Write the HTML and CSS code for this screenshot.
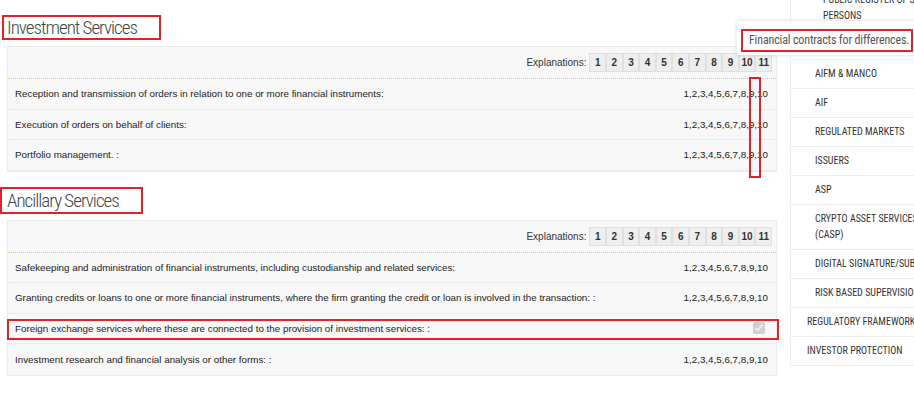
FILE: index.html
```html
<!DOCTYPE html>
<html lang="en">
<head>
  <meta charset="UTF-8">
  <title>Services</title>
  <link rel="stylesheet" href="styles.css">
</head>
<body>

  <div class="page">
    <main class="content">

      <h2 class="section-title first">Investment Services</h2>
      <div class="panel">
        <div class="panel-head">
          <span class="expl-label">Explanations:</span>
          <div class="expl">
            <span>1</span><span>2</span><span>3</span><span>4</span><span>5</span><span>6</span><span>7</span><span>8</span><span>9</span><span>10</span><span>11</span>
          </div>
        </div>
        <div class="row"><span>Reception and transmission of orders in relation to one or more financial instruments:</span><span class="codes">1,2,3,4,5,6,7,8,9,10</span></div>
        <div class="row"><span>Execution of orders on behalf of clients:</span><span class="codes">1,2,3,4,5,6,7,8,9,10</span></div>
        <div class="row"><span>Portfolio management. :</span><span class="codes">1,2,3,4,5,6,7,8,9,10</span></div>
        <div class="mark-col"></div>
      </div>

      <h2 class="section-title second">Ancillary Services</h2>
      <div class="panel">
        <div class="panel-head">
          <span class="expl-label">Explanations:</span>
          <div class="expl">
            <span>1</span><span>2</span><span>3</span><span>4</span><span>5</span><span>6</span><span>7</span><span>8</span><span>9</span><span>10</span><span>11</span>
          </div>
        </div>
        <div class="row"><span>Safekeeping and administration of financial instruments, including custodianship and related services:</span><span class="codes">1,2,3,4,5,6,7,8,9,10</span></div>
        <div class="row"><span>Granting credits or loans to one or more financial instruments, where the firm granting the credit or loan is involved in the transaction: :</span><span class="codes">1,2,3,4,5,6,7,8,9,10</span></div>
        <div class="row marked"><span>Foreign exchange services where these are connected to the provision of investment services: :</span><input type="checkbox" checked disabled></div>
        <div class="row"><span>Investment research and financial analysis or other forms: :</span><span class="codes">1,2,3,4,5,6,7,8,9,10</span></div>
      </div>

    </main>

    <aside class="sidebar">
      <ul>
        <li class="lvl3">PUBLIC REGISTER OF SUPERVISED<br>PERSONS</li>
        <li class="lvl2">UCITS</li>
        <li class="lvl2">AIFM &amp; MANCO</li>
        <li class="lvl2">AIF</li>
        <li class="lvl2">REGULATED MARKETS</li>
        <li class="lvl2">ISSUERS</li>
        <li class="lvl2">ASP</li>
        <li class="lvl2">CRYPTO ASSET SERVICES<br>(CASP)</li>
        <li class="lvl2">DIGITAL SIGNATURE/SUBSCRIPTION</li>
        <li class="lvl2">RISK BASED SUPERVISION</li>
        <li>REGULATORY FRAMEWORK</li>
        <li>INVESTOR PROTECTION</li>
      </ul>
    </aside>
  </div>

  <div class="tooltip">
    <span>Financial contracts for differences.</span>
  </div>

</body>
</html>
```

FILE: styles.css
```css
* { box-sizing: border-box; }
body {
  margin: 0;
  background: #fff;
  font-family: "Liberation Sans", Arial, sans-serif;
  color: #333;
  overflow: hidden;
}

.page {
  display: flex;
  align-items: flex-start;
}

.content {
  width: 779px;
  flex-shrink: 0;
  padding-top: 15px;
}

/* headings with the red annotation frame */
.section-title {
  display: inline-block;
  margin: 0;
  font-family: Roboto, sans-serif;
  font-weight: 300;
  font-stretch: condensed;
  font-size: 19px;
  letter-spacing: -1px;
  color: #444;
  border: 2px solid #e3212a;
  padding-right: 22px;
}
.section-title.first {
  margin-left: 2px;
  padding-left: 3px;
  line-height: 21px;
}
.section-title.second {
  margin-top: 15px;
  padding-left: 5px;
  line-height: 23px;
}

.panel {
  position: relative;
  margin: 6px 0 0 7px;
  width: 770px;
  background: #f8f8f8;
  border: 1px solid #ececec;
}

.panel-head {
  display: flex;
  justify-content: flex-end;
  align-items: center;
  padding: 6px 4px 6px 0;
  border-bottom: 1px dotted #cfd46a;
  font-size: 10px;
}
.expl-label { margin-right: 3px; }
.expl { display: flex; }
.expl span {
  width: 16.6px;
  height: 19px;
  line-height: 17px;
  text-align: center;
  font-weight: bold;
  background: #eee;
  border: 1px solid #e0e0e0;
}

.row {
  position: relative;
  display: flex;
  justify-content: space-between;
  align-items: center;
  height: 30.5px;
  padding: 0 8px 0 7px;
  border-bottom: 1px dotted #e2e2e2;
  font-size: 9.8px;
  color: #222;
}
.row:last-of-type { border-bottom: none; }
.row input {
  margin: 0 3px 0 0;
  width: 12px;
  height: 12px;
}
.row.marked::after {
  content: "";
  position: absolute;
  left: -1px;
  right: -3px;
  top: 5px;
  bottom: 3px;
  border: 2px solid #e3212a;
}

.mark-col {
  position: absolute;
  left: 741px;
  top: 30px;
  width: 12px;
  height: 101px;
  border: 2px solid #e3212a;
}

.sidebar {
  flex-shrink: 0;
  width: 150px;
  margin: -14px 0 0 11px;
  border: 1px solid #eee;
  border-top: none;
  background: #fff;
}
.sidebar ul {
  list-style: none;
  margin: 0;
  padding: 0;
}
.sidebar li {
  padding: 6px 0 6px 16px;
  line-height: 16px;
  border-bottom: 1px solid #eee;
  font-family: Roboto, sans-serif;
  font-stretch: condensed;
  font-size: 10px;
  color: #333;
  white-space: nowrap;
}
.sidebar li.lvl2 { padding-left: 24px; }
.sidebar li.lvl3 { padding-left: 32px; }
.sidebar li:last-child { border-bottom: none; }

.tooltip {
  position: absolute;
  top: 21px;
  left: 737px;
  width: 190px;
  padding: 8px 0 3px 4px;
  background: #fff;
  box-shadow: 0 0 4px rgba(0,0,0,0.15);
}
.tooltip span {
  display: block;
  width: 172px;
  padding: 2px 0 3px 6px;
  border: 2px solid #e3212a;
  font-family: Roboto, sans-serif;
  font-stretch: condensed;
  font-size: 12px;
  letter-spacing: -0.15px;
  color: #555;
  line-height: 14px;
  white-space: nowrap;
}
```
